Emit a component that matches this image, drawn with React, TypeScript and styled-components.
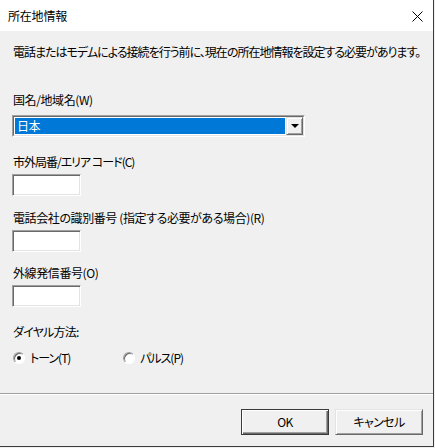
import styled, { createGlobalStyle } from "styled-components";

const GlobalStyle = createGlobalStyle`
  html, body {
    margin: 0;
    padding: 0;
    background: #f0f0f0;
  }
  body {
    font-family: "Noto Sans CJK JP", "Noto Sans", sans-serif;
    font-size: 12px;
    color: #000;
    font-feature-settings: "palt";
    letter-spacing: -0.4px;
  }
`;

function CloseIcon() {
  return (
    <svg width="11" height="11" viewBox="0 0 11 11">
      <path d="M0.5 0.5 L10.5 10.5 M10.5 0.5 L0.5 10.5" stroke="#000" strokeWidth="1" />
    </svg>
  );
}

function Field({ label, gap, spacing }: { label: string; gap: number; spacing?: number }) {
  return (
    <FieldGroup $top={gap}>
      <Label $spacing={spacing}>{label}</Label>
      <TextBox type="text" />
    </FieldGroup>
  );
}

function App() {
  return (
    <>
      <GlobalStyle />
      <Window>
        <TitleBar>
          <Title>所在地情報</Title>
          <CloseButton>
            <CloseIcon />
          </CloseButton>
        </TitleBar>
        <Body>
          <Description>
            電話またはモデムによる接続を行う前に、現在の所在地情報を設定する必要があります。
          </Description>
          <FieldGroup $top={32} $labelGap={7}>
            <Label>国名/地域名(W)</Label>
            <ComboOuter>
              <ComboInner>
                <ComboValue>日本</ComboValue>
                <ComboButton>
                  <Arrow />
                </ComboButton>
              </ComboInner>
            </ComboOuter>
          </FieldGroup>
          <Field label="市外局番/エリア コード(C)" gap={17} spacing={-1} />
          <Field label="電話会社の識別番号 (指定する必要がある場合)(R)" gap={14} />
          <Field label="外線発信番号(O)" gap={13} />
          <FieldGroup $top={17} $labelGap={10}>
            <Label $spacing={-0.8}>ダイヤル方法:</Label>
            <RadioRow>
              <RadioOption>
                <RadioCircle $checked />
                <RadioText>トーン(T)</RadioText>
              </RadioOption>
              <RadioOption>
                <RadioCircle />
                <RadioText>パルス(P)</RadioText>
              </RadioOption>
            </RadioRow>
          </FieldGroup>
        </Body>
        <Footer>
          <Button $primary>OK</Button>
          <Button>キャンセル</Button>
        </Footer>
      </Window>
    </>
  );
}

const Window = styled.div`
  width: 433px;
  height: 446px;
  display: flex;
  flex-direction: column;
  background: #f0f0f0;
  border-right: 1px solid #3c3c3c;
  border-bottom: 1px solid #3c3c3c;
`;

const TitleBar = styled.div`
  height: 31px;
  flex-shrink: 0;
  background: #fff;
  display: flex;
  align-items: center;
  justify-content: space-between;
  padding: 0 10px 0 8px;
`;

const Title = styled.span`
  font-size: 12px;
  line-height: 16px;
  letter-spacing: -0.2px;
`;

const CloseButton = styled.div`
  width: 11px;
  height: 11px;
  display: flex;
  margin-top: 1px;
`;

const Body = styled.div`
  flex: 1;
  padding: 13px 0 0 12px;
  display: flex;
  flex-direction: column;
`;

const Description = styled.div`
  line-height: 16px;
  padding-left: 1px;
  white-space: nowrap;
  letter-spacing: -1px;
`;

const FieldGroup = styled.div<{ $top: number; $labelGap?: number }>`
  display: flex;
  flex-direction: column;
  align-items: flex-start;
  gap: ${(p) => p.$labelGap ?? 4}px;
  margin-top: ${(p) => p.$top}px;
`;

const Label = styled.div<{ $spacing?: number }>`
  line-height: 16px;
  padding-left: 1px;
  white-space: nowrap;
  letter-spacing: ${(p) => p.$spacing ?? -0.4}px;
`;

const TextBox = styled.input`
  box-sizing: border-box;
  width: 69px;
  height: 22px;
  margin: 0;
  padding: 0;
  background: #fff;
  border: 1px solid;
  border-color: #a0a0a0 #fff #fff #a0a0a0;
  box-shadow: inset 1px 1px #696969, inset -1px -1px #e3e3e3;
  outline: none;
`;

const ComboOuter = styled.div`
  box-sizing: border-box;
  width: 293px;
  height: 22px;
  border: 1px solid;
  border-color: #a0a0a0 #fff #fff #a0a0a0;
`;

const ComboInner = styled.div`
  height: 100%;
  box-sizing: border-box;
  display: flex;
  background: #fff;
  border: 1px solid;
  border-color: #696969 #e3e3e3 #e3e3e3 #696969;
`;

const ComboValue = styled.div`
  flex: 1;
  margin: 1px;
  background: #0078d7;
  color: #fff;
  line-height: 16px;
  padding-left: 2px;
`;

const ComboButton = styled.div`
  width: 17px;
  box-sizing: border-box;
  background: #f0f0f0;
  border: 1px solid;
  border-color: #e3e3e3 #696969 #696969 #e3e3e3;
  box-shadow: inset 1px 1px #fff, inset -1px -1px #a0a0a0;
  display: flex;
  align-items: center;
  justify-content: center;
`;

const Arrow = styled.span`
  width: 0;
  height: 0;
  border-left: 4px solid transparent;
  border-right: 4px solid transparent;
  border-top: 4px solid #000;
`;

const RadioRow = styled.div`
  display: flex;
  line-height: 16px;
`;

const RadioOption = styled.label`
  width: 109px;
  display: flex;
  align-items: center;
  gap: 5px;
  padding-left: 1px;
`;

const RadioText = styled.span`
  letter-spacing: -1px;
`;

const RadioCircle = styled.span<{ $checked?: boolean }>`
  box-sizing: border-box;
  width: 12px;
  height: 12px;
  border-radius: 50%;
  background: #fff;
  border: 1px solid;
  border-color: #a0a0a0 #fff #fff #a0a0a0;
  box-shadow: inset 1px 1px #696969;
  display: flex;
  align-items: center;
  justify-content: center;
  &::after {
    content: "";
    width: 4px;
    height: 4px;
    border-radius: 50%;
    background: #000;
    display: ${(p) => (p.$checked ? "block" : "none")};
  }
`;

const Footer = styled.div`
  flex-shrink: 0;
  height: 53px;
  border-top: 1px solid #a0a0a0;
  box-shadow: inset 0 1px #fff;
  display: flex;
  justify-content: flex-end;
  align-items: flex-start;
  gap: 6px;
  padding: 15px 10px 0 0;
  box-sizing: border-box;
`;

const Button = styled.div<{ $primary?: boolean }>`
  box-sizing: border-box;
  width: 88px;
  height: 26px;
  display: flex;
  align-items: center;
  justify-content: center;
  line-height: 16px;
  letter-spacing: -0.6px;
  background: #f0f0f0;
  border: 1px solid;
  border-color: ${(p) => (p.$primary ? "#3a3a3a" : "#e3e3e3 #696969 #696969 #e3e3e3")};
  box-shadow: ${(p) =>
    p.$primary
      ? "inset 1px 1px #fff, inset -1px -1px #696969, inset -2px -2px #a0a0a0"
      : "inset 1px 1px #fff, inset -1px -1px #a0a0a0"};
`;

export default App;
